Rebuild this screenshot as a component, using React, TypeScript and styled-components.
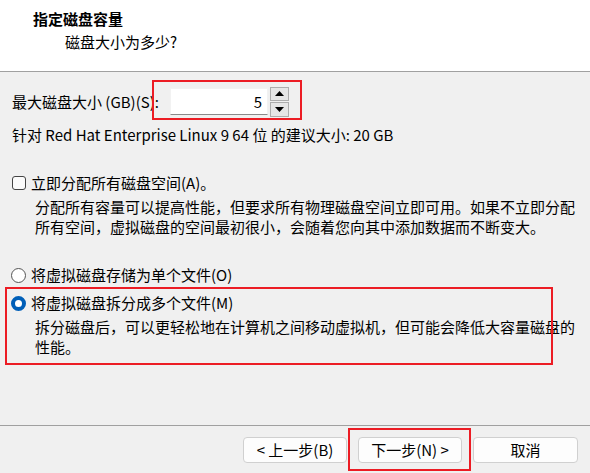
import React from "react";
import styled, { createGlobalStyle } from "styled-components";

const Global = createGlobalStyle`
  html, body { margin: 0; padding: 0; }
  body {
    width: 590px;
    height: 473px;
    overflow: hidden;
    background: #f0f0f0;
    font-family: "Noto Sans CJK SC", "Noto Sans", sans-serif;
    font-size: 15px;
    color: #000;
  }
`;

const Dialog = styled.div`
  width: 590px;
  height: 473px;
  display: flex;
  flex-direction: column;
  background: #f0f0f0;
`;

const Header = styled.div`
  height: 72px;
  background: #fff;
  border-bottom: 1px solid #a0a0a0;
  box-sizing: border-box;
  padding: 8px 0 0 33px;
  display: flex;
  flex-direction: column;
`;

const Title = styled.div`
  font-weight: 700;
  line-height: 22px;
`;

const Subtitle = styled.div`
  padding-left: 32px;
  line-height: 22px;
  margin-top: 1px;
`;

const Body = styled.div`
  flex: 1;
  padding: 15px 0 0 12px;
  display: flex;
  flex-direction: column;
`;

const SizeRow = styled.div`
  position: relative;
  display: flex;
  align-items: center;
  height: 29px;
  line-height: 20px;
`;

const Label = styled.span`
  width: 158px;
  flex: none;
`;

const Input = styled.div`
  width: 98px;
  height: 27px;
  box-sizing: border-box;
  background: #fff;
  border: 1px solid #f2f2f2;
  border-bottom-color: #8a8a8a;
  text-align: right;
  padding-right: 5px;
  line-height: 25px;
`;

const Spinner = styled.div`
  margin-left: 2px;
  width: 19px;
  height: 30px;
  box-sizing: border-box;
  display: flex;
  flex-direction: column;
  gap: 1px;
`;

const SpinButton = styled.div`
  flex: 1;
  border: 1px solid #adadad;
  background: #e6e6e6;
  display: flex;
  align-items: center;
  justify-content: center;
`;

const Mark = styled.div<{ $left: number; $top: number; $w: number; $h: number }>`
  position: absolute;
  left: ${(p) => p.$left}px;
  top: ${(p) => p.$top}px;
  width: ${(p) => p.$w}px;
  height: ${(p) => p.$h}px;
  box-sizing: border-box;
  border: 2px solid #ec1c24;
  pointer-events: none;
`;

const Line = styled.div<{ $mt?: number }>`
  margin-top: ${(p) => p.$mt ?? 0}px;
  line-height: 20px;
`;

const OptionRow = styled.div<{ $mt: number }>`
  margin-top: ${(p) => p.$mt}px;
  display: flex;
  align-items: center;
  gap: 5px;
  line-height: 20px;
`;

const Box = styled.span`
  display: block;
  flex: none;
  width: 14px;
  height: 14px;
  box-sizing: border-box;
  border: 1px solid #444;
  border-radius: 3px;
  background: #fbfbfb;
`;

const Radio = styled.span<{ $on?: boolean }>`
  display: block;
  flex: none;
  width: 15px;
  height: 15px;
  box-sizing: border-box;
  border-radius: 50%;
  margin-left: -1px;
  border: ${(p) => (p.$on ? "4.5px solid #005fb8" : "1px solid #555")};
  background: #fff;
`;

const Desc = styled.div<{ $mt: number }>`
  margin-top: ${(p) => p.$mt}px;
  padding-left: 23px;
  line-height: 20px;
  width: 545px;
`;

const Group = styled.div`
  position: relative;
`;

const Footer = styled.div`
  height: 48px;
  border-top: 1px solid #a0a0a0;
  box-sizing: border-box;
  display: flex;
  justify-content: flex-end;
  align-items: flex-start;
  padding: 11px 12px 0 0;
  gap: 11px;
`;

const ButtonWrap = styled.div`
  position: relative;
`;

const Button = styled.div<{ $w?: number }>`
  width: ${(p) => p.$w ?? 104}px;
  height: 26px;
  box-sizing: border-box;
  border: 1px solid #d0d0d0;
  border-radius: 4px;
  background: #fdfdfd;
  display: flex;
  align-items: center;
  justify-content: center;
  line-height: 20px;
`;

export default function App() {
  return (
    <>
      <Global />
      <Dialog>
        <Header>
          <Title>指定磁盘容量</Title>
          <Subtitle>磁盘大小为多少?</Subtitle>
        </Header>
        <Body>
          <SizeRow>
            <Label>最大磁盘大小 (GB)(S):</Label>
            <Input>5</Input>
            <Spinner>
              <SpinButton>
                <svg width="9" height="5" viewBox="0 0 9 5"><path d="M0 5 L4.5 0 L9 5 Z" fill="#000" /></svg>
              </SpinButton>
              <SpinButton>
                <svg width="9" height="5" viewBox="0 0 9 5"><path d="M0 0 L4.5 5 L9 0 Z" fill="#000" /></svg>
              </SpinButton>
            </Spinner>
            <Mark $left={140} $top={-7} $w={150} $h={40} />
          </SizeRow>
          <Line $mt={9}>针对 Red Hat Enterprise Linux 9 64 位 的建议大小: 20 GB</Line>
          <OptionRow $mt={28}>
            <Box />
            <span>立即分配所有磁盘空间(A)。</span>
          </OptionRow>
          <Desc $mt={4}>
            分配所有容量可以提高性能，但要求所有物理磁盘空间立即可用。如果不立即分配所有空间，虚拟磁盘的空间最初很小，会随着您向其中添加数据而不断变大。
          </Desc>
          <OptionRow $mt={28}>
            <Radio />
            <span>将虚拟磁盘存储为单个文件(O)</span>
          </OptionRow>
          <Group>
            <OptionRow $mt={8}>
              <Radio $on />
              <span>将虚拟磁盘拆分成多个文件(M)</span>
            </OptionRow>
            <Desc $mt={4}>
              拆分磁盘后，可以更轻松地在计算机之间移动虚拟机，但可能会降低大容量磁盘的性能。
            </Desc>
            <Mark $left={-7} $top={2} $w={548} $h={78} />
          </Group>
        </Body>
        <Footer>
          <Button>&lt; 上一步(B)</Button>
          <ButtonWrap>
            <Button>下一步(N) &gt;</Button>
            <Mark $left={-10} $top={-9} $w={123} $h={43} />
          </ButtonWrap>
          <Button $w={105}>取消</Button>
        </Footer>
      </Dialog>
    </>
  );
}
